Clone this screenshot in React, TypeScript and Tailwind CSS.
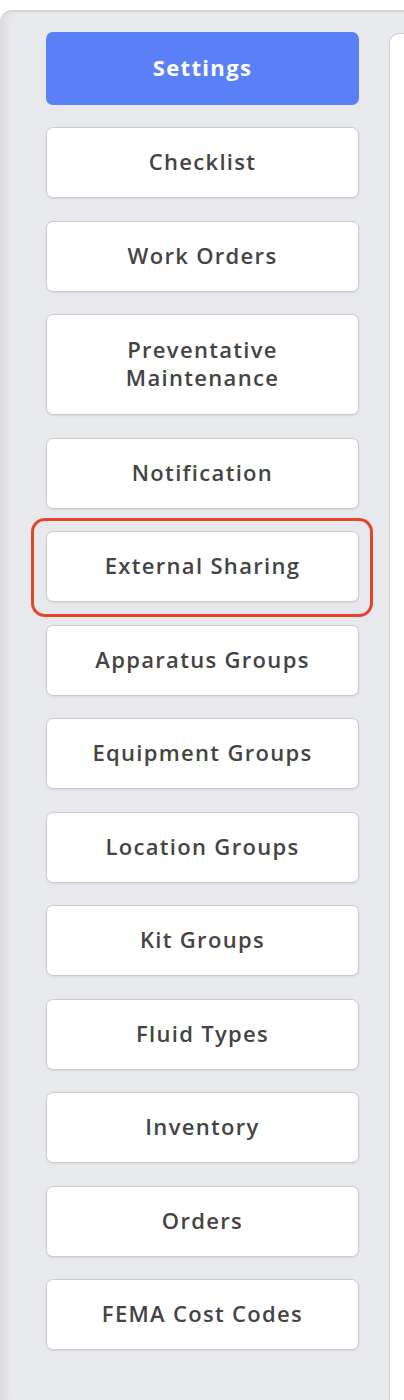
import React from "react";

const items = [
  "Checklist",
  "Work Orders",
  "Preventative Maintenance",
  "Notification",
  "External Sharing",
  "Apparatus Groups",
  "Equipment Groups",
  "Location Groups",
  "Kit Groups",
  "Fluid Types",
  "Inventory",
  "Orders",
  "FEMA Cost Codes",
];

export default function App() {
  return (
    <div
      className="h-[1400px] w-[404px] overflow-hidden bg-white pt-[10px]"
      style={{ fontFamily: '"Open Sans", "Liberation Sans", sans-serif' }}
    >
      <div className="flex h-full rounded-tl-[12px] border-t-2 border-[#d3d4d7] bg-[#e8e9ed] shadow-[inset_12px_0_10px_-8px_rgba(0,0,0,0.07)]">
        <div className="ml-[46px] flex w-[313px] shrink-0 flex-col gap-[22.5px] pt-[20px]">
          <div className="mb-[-0.5px] flex h-[73px] items-center justify-center rounded-[7px] bg-[#5a7ff7] pb-[2px] text-[22px] font-bold tracking-[0.06em] text-white">
            Settings
          </div>
          {items.map((t) => (
            <div key={t} className="relative">
              {t === "External Sharing" && (
                <div className="pointer-events-none absolute -bottom-[15px] -left-[15px] -right-[14px] -top-[13px] rounded-[14px] border-[3px] border-[#e5442b]" />
              )}
              <div
                className={
                  (t === "Preventative Maintenance" ? "h-[101px] " : "h-[71px] ") +
                  "flex items-center justify-center rounded-[7px] border border-[#cbcbcd] bg-white px-4 pb-[3px] text-center text-[22px] font-semibold leading-[28px] tracking-[0.06em] text-[#444444] shadow-[0_1px_2px_rgba(0,0,0,0.08)]"
                }
              >
                {t === "Preventative Maintenance" ? (
                  <span>
                    Preventative
                    <br />
                    Maintenance
                  </span>
                ) : (
                  t
                )}
              </div>
            </div>
          ))}
        </div>
        <div className="ml-[30px] mt-[21px] flex-1 rounded-tl-[10px] border-l border-t border-[#cdcdd0] bg-white" />
      </div>
    </div>
  );
}
